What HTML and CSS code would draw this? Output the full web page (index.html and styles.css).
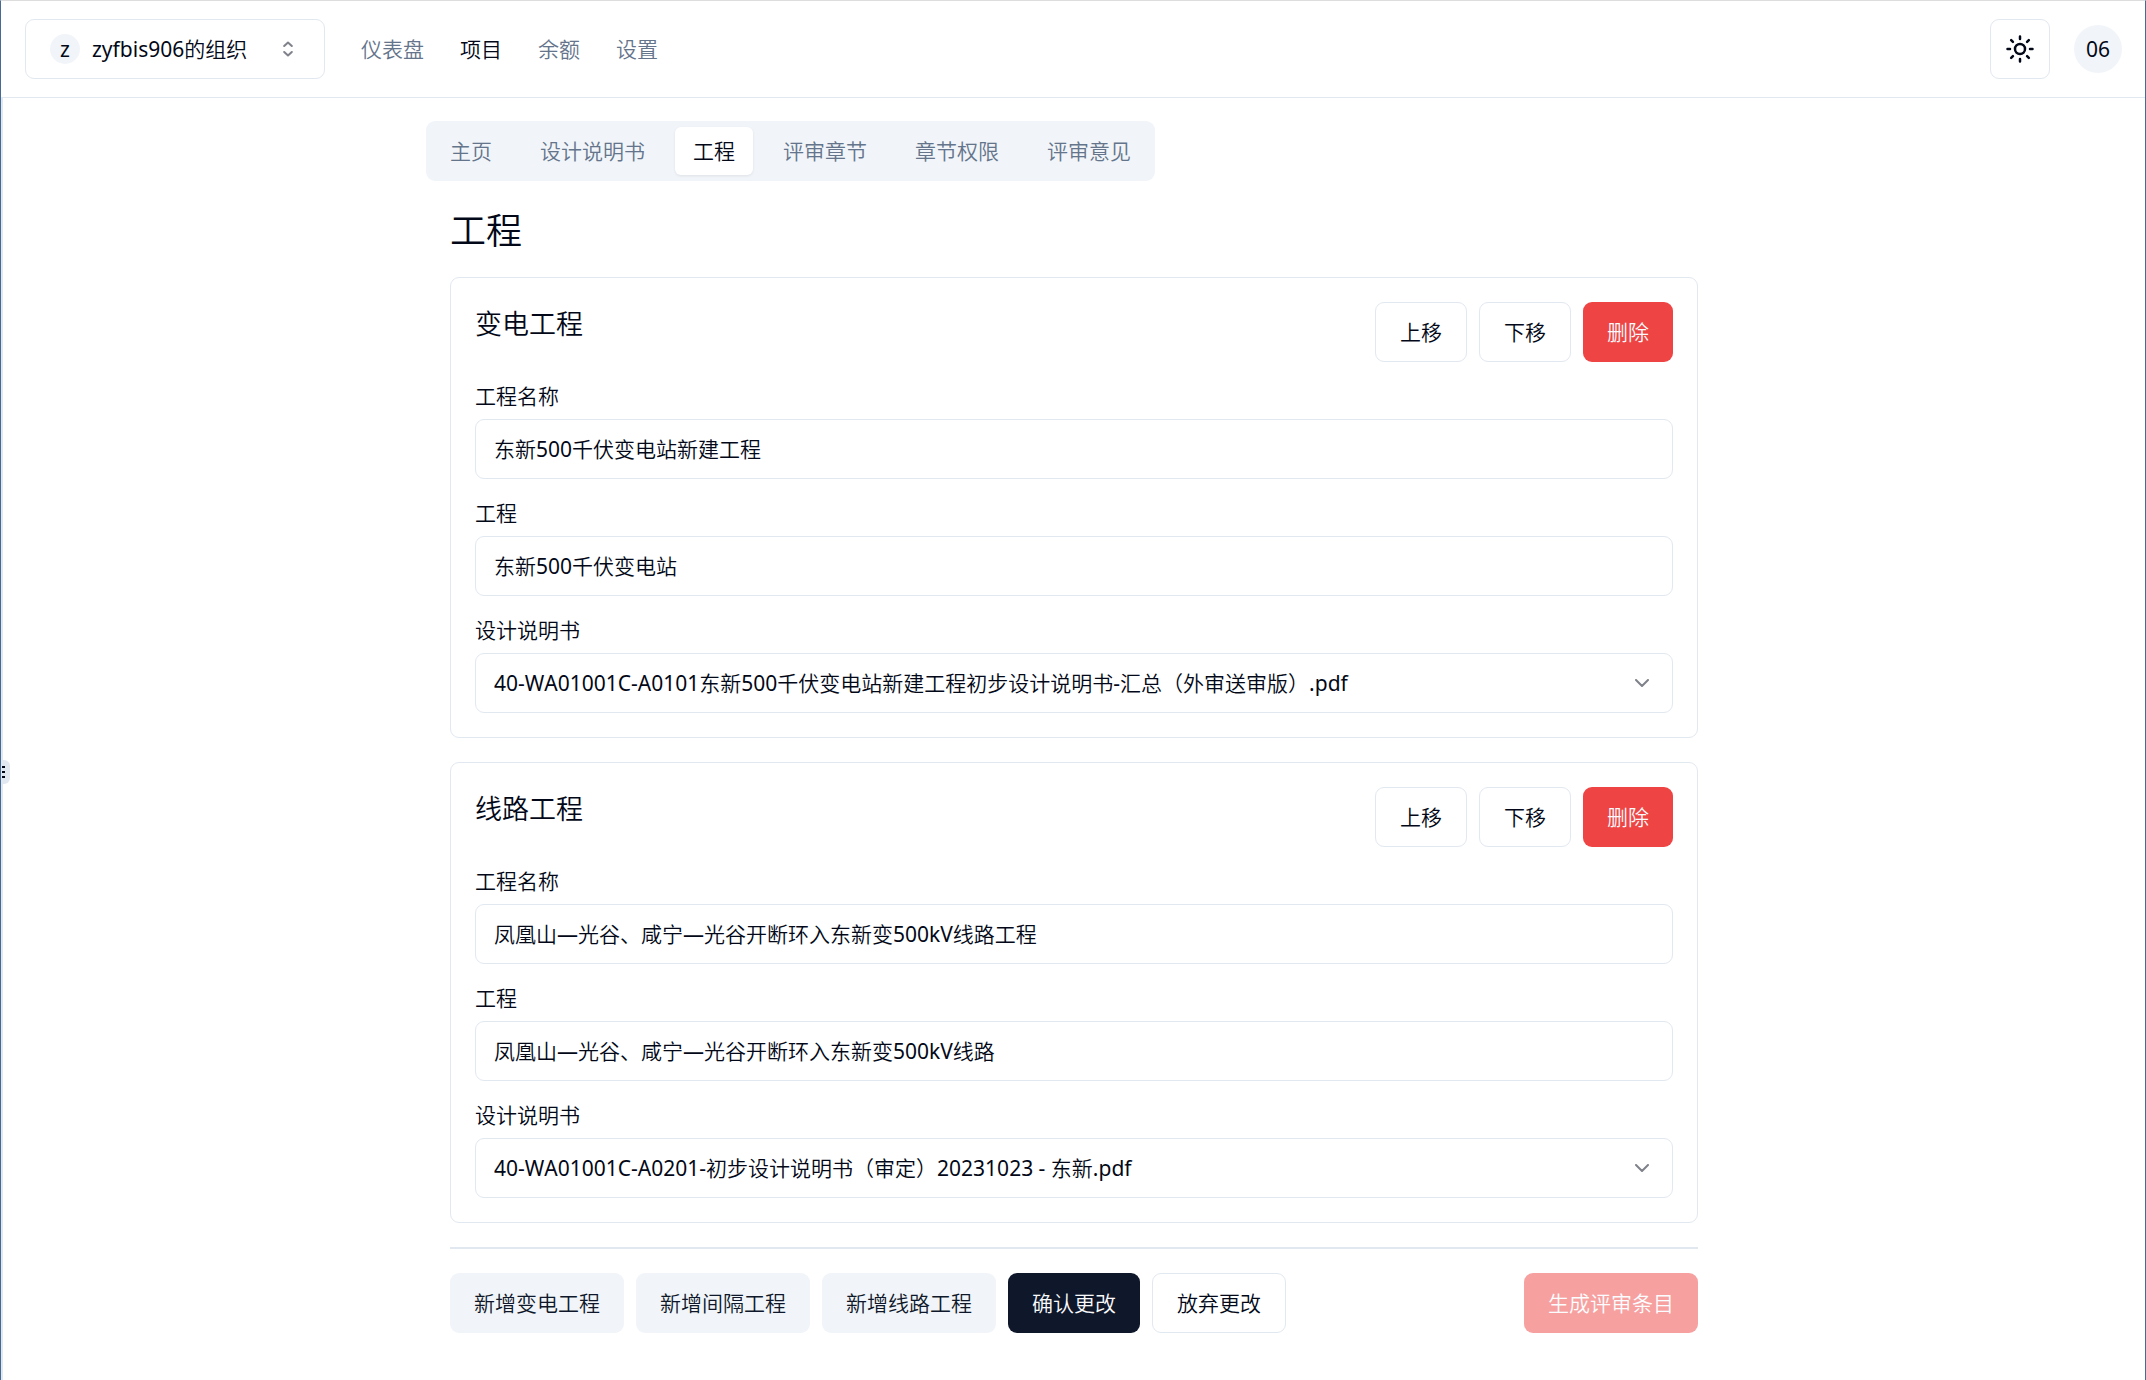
FILE: index.html
```html
<!DOCTYPE html>
<html lang="zh-CN">
<head>
<meta charset="utf-8">
<meta name="viewport" content="width=device-width, initial-scale=1">
<title>工程</title>
<link rel="stylesheet" href="styles.css">
</head>
<body>
<header class="topbar">
  <button class="org-switch" type="button">
    <span class="org-avatar">z</span>
    <span class="org-name">zyfbis906的组织</span>
    <svg class="icon-sort" viewBox="0 0 24 24" aria-hidden="true"><path d="m8.200 9 3.800-3.500 3.800 3.500M8.200 15l3.800 3.500 3.800-3.500"/></svg>
  </button>
  <nav class="main-nav">
    <a href="#dashboard">仪表盘</a>
    <a class="is-active" href="#projects">项目</a>
    <a href="#balance">余额</a>
    <a href="#settings">设置</a>
  </nav>
  <div class="topbar-tools">
    <button class="theme-toggle" type="button" aria-label="切换主题">
      <svg class="icon-sun" viewBox="0 0 24 24" aria-hidden="true"><circle cx="12" cy="12" r="4"/><path d="M12 2v2M12 20v2M4.930 4.930l1.410 1.410M17.660 17.660l1.410 1.410M2 12h2M20 12h2M6.340 17.660l-1.410 1.410M19.070 4.930l-1.410 1.410"/></svg>
    </button>
    <button class="user-avatar" type="button">06</button>
  </div>
</header>
<button class="side-handle" type="button" aria-label="展开侧栏"><svg viewBox="0 0 4 14" aria-hidden="true"><path d="M0 1h3v2H0zM0 6h3v2H0zM0 11h3v2H0z"/></svg></button>
<main class="page">
  <div class="container">
    <nav class="tabs">
      <a href="#home">主页</a>
      <a href="#manual">设计说明书</a>
      <a class="is-active" href="#works">工程</a>
      <a href="#chapters">评审章节</a>
      <a href="#permissions">章节权限</a>
      <a href="#comments">评审意见</a>
    </nav>
    <form class="content">
      <h1>工程</h1>
      <section class="card">
        <div class="card-head">
          <h2>变电工程</h2>
          <div class="actions">
            <button class="btn btn-outline" type="button">上移</button>
            <button class="btn btn-outline" type="button">下移</button>
            <button class="btn btn-danger" type="button">删除</button>
          </div>
        </div>
        <div class="field">
          <label for="name-1">工程名称</label>
          <input class="control" id="name-1" type="text" value="东新500千伏变电站新建工程">
        </div>
        <div class="field">
          <label for="work-1">工程</label>
          <input class="control" id="work-1" type="text" value="东新500千伏变电站">
        </div>
        <div class="field">
          <label for="doc-1">设计说明书</label>
          <div class="select">
            <select class="control" id="doc-1"><option>40-WA01001C-A0101东新500千伏变电站新建工程初步设计说明书-汇总（外审送审版）.pdf</option></select>
            <svg class="icon-down" viewBox="0 0 24 24" aria-hidden="true"><path d="m6 9 6 6 6-6"/></svg>
          </div>
        </div>
      </section>
      <section class="card">
        <div class="card-head">
          <h2>线路工程</h2>
          <div class="actions">
            <button class="btn btn-outline" type="button">上移</button>
            <button class="btn btn-outline" type="button">下移</button>
            <button class="btn btn-danger" type="button">删除</button>
          </div>
        </div>
        <div class="field">
          <label for="name-2">工程名称</label>
          <input class="control" id="name-2" type="text" value="凤凰山—光谷、咸宁—光谷开断环入东新变500kV线路工程">
        </div>
        <div class="field">
          <label for="work-2">工程</label>
          <input class="control" id="work-2" type="text" value="凤凰山—光谷、咸宁—光谷开断环入东新变500kV线路">
        </div>
        <div class="field">
          <label for="doc-2">设计说明书</label>
          <div class="select">
            <select class="control" id="doc-2"><option>40-WA01001C-A0201-初步设计说明书（审定）20231023 - 东新.pdf</option></select>
            <svg class="icon-down" viewBox="0 0 24 24" aria-hidden="true"><path d="m6 9 6 6 6-6"/></svg>
          </div>
        </div>
      </section>
      <hr class="divider">
      <div class="form-actions">
        <button class="btn btn-soft" type="button">新增变电工程</button>
        <button class="btn btn-soft" type="button">新增间隔工程</button>
        <button class="btn btn-soft" type="button">新增线路工程</button>
        <button class="btn btn-primary" type="submit">确认更改</button>
        <button class="btn btn-outline" type="reset">放弃更改</button>
        <button class="btn btn-danger generate" type="button" disabled>生成评审条目</button>
      </div>
    </form>
  </div>
</main>
</body>
</html>
```
FILE: styles.css
```css
:root {
  --ink: #020817;
  --muted: #64748b;
  --line: #e2e8f0;
  --soft: #f1f5f9;
  --navy: #0f172a;
  --danger: #ef4444;
}

* {
  box-sizing: border-box;
}

body {
  display: flex;
  flex-direction: column;
  margin: 0;
  min-height: 100vh;
  border-top: 1px solid #dddddd;
  border-left: 1px solid #466a94;
  border-right: 1px solid #466a94;
  background: #ffffff;
  color: var(--ink);
  font-family: "Noto Sans", "Noto Sans CJK SC DemiLight", "Noto Sans CJK SC", sans-serif;
  font-size: 21px;
  font-weight: 400;
  font-kerning: none;
  line-height: 30px;
}

button,
input,
select {
  font: inherit;
  font-kerning: inherit;
  color: inherit;
}

button {
  cursor: pointer;
}

a {
  color: var(--muted);
  text-decoration: none;
}

a.is-active {
  color: var(--ink);
}

svg {
  fill: none;
  stroke: currentColor;
  stroke-width: 2;
  stroke-linecap: round;
  stroke-linejoin: round;
}

h1,
h2 {
  margin: 0;
  font-weight: 400;
}

/* Top bar */
.topbar {
  display: flex;
  align-items: center;
  height: 97px;
  padding: 0 23px 0 24px;
  border-bottom: 1px solid var(--line);
}

.org-switch {
  display: flex;
  align-items: center;
  gap: 12px;
  width: 300px;
  height: 60px;
  padding: 0 24px;
  border: 1px solid var(--line);
  border-radius: 9px;
  background: #ffffff;
}

.org-avatar,
.user-avatar {
  display: grid;
  place-items: center;
  border-radius: 50%;
  background: var(--soft);
}

.org-avatar {
  width: 30px;
  height: 30px;
}

.icon-sort {
  width: 24px;
  height: 24px;
  margin-left: auto;
  opacity: 0.5;
}

.main-nav {
  display: flex;
  gap: 36px;
  margin-left: 36px;
}

.topbar-tools {
  display: flex;
  align-items: center;
  gap: 24px;
  margin-left: auto;
}

.theme-toggle {
  display: grid;
  place-items: center;
  width: 60px;
  height: 60px;
  padding: 0;
  border: 1px solid var(--line);
  border-radius: 9px;
  background: #ffffff;
}

.icon-sun {
  width: 30px;
  height: 30px;
}

.user-avatar {
  width: 48px;
  height: 48px;
  padding: 0;
  border: 0;
}

/* Sidebar handle, laid over the left window edge */
.side-handle {
  position: absolute;
  top: 760px;
  left: 1px;
  display: grid;
  place-items: center start;
  width: 9px;
  height: 24px;
  padding: 0 0 0 1px;
  border: 0;
  border-radius: 0 6px 6px 0;
  background: var(--line);
}

.side-handle svg {
  width: 4px;
  height: 14px;
  fill: var(--ink);
  stroke: none;
}

/* Page */
.page {
  flex: 1;
  padding: 23px 0;
  border-left: 2px solid var(--line);
}

.container {
  max-width: 1296px;
  margin: 0 auto;
}

.tabs {
  display: flex;
  gap: 12px;
  width: max-content;
  padding: 6px;
  border-radius: 9px;
  background: var(--soft);
}

.tabs a {
  padding: 9px 18px;
  border-radius: 6px;
}

.tabs .is-active {
  background: #ffffff;
  box-shadow: 0 1px 3px rgba(0, 0, 0, 0.08);
}

.content {
  display: flex;
  flex-direction: column;
  gap: 24px;
  padding: 27px 24px 0;
}

h1 {
  font-size: 36px;
  line-height: 45px;
}

h2 {
  font-size: 27px;
  line-height: 44px;
}

.card {
  display: flex;
  flex-direction: column;
  gap: 24px;
  padding: 24px;
  border: 1px solid var(--line);
  border-radius: 9px;
}

.card-head {
  display: flex;
  justify-content: space-between;
}

.actions,
.form-actions {
  display: flex;
  gap: 12px;
}

.field {
  display: flex;
  flex-direction: column;
  gap: 12px;
}

.field label {
  line-height: 21px;
}

.control {
  width: 100%;
  height: 60px;
  padding: 0 18px;
  border: 1px solid var(--line);
  border-radius: 9px;
  background: #ffffff;
}

input.control {
  padding-bottom: 2px;
}

.select {
  display: grid;
  align-items: center;
}

.select > * {
  grid-area: 1 / 1;
}

.select .control {
  appearance: none;
}

.icon-down {
  justify-self: end;
  width: 24px;
  height: 24px;
  margin-right: 19px;
  opacity: 0.5;
  pointer-events: none;
}

.divider {
  width: 100%;
  height: 2px;
  margin: 0;
  border: 0;
  background: var(--line);
}

/* Buttons */
.btn {
  height: 60px;
  padding: 0 24px;
  border: 0;
  border-radius: 9px;
}

.btn-outline {
  border: 1px solid var(--line);
  background: #ffffff;
}

.btn-soft {
  background: var(--soft);
  color: var(--navy);
}

.btn-primary {
  background: var(--navy);
  color: #f8fafc;
}

.btn-danger {
  background: var(--danger);
  color: #f8fafc;
}

.btn:disabled {
  opacity: 0.5;
}

.generate {
  margin-left: auto;
}
```
